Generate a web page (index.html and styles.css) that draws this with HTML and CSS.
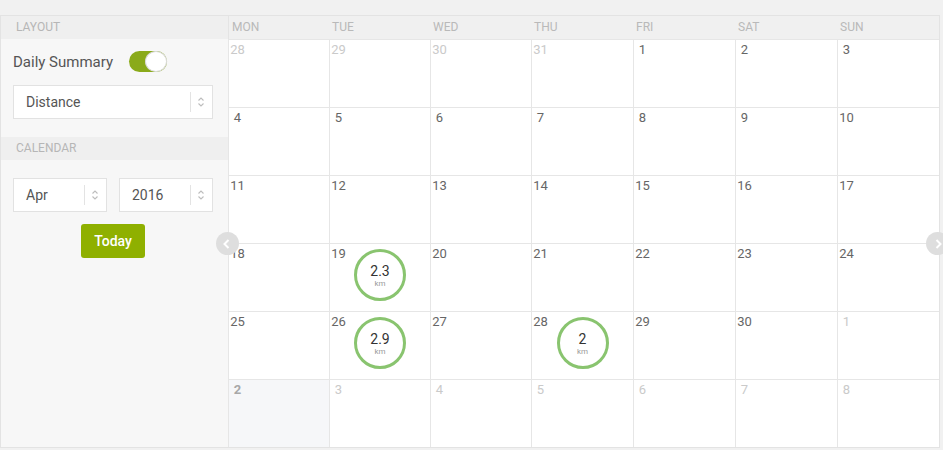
FILE: index.html
```html
<!DOCTYPE html>
<html>
<head>
<meta charset="utf-8">
<link rel="stylesheet" href="styles.css">
</head>
<body>
<div class="app">
  <aside class="side">
    <div class="sec-head">Layout</div>
    <div class="side-body">
      <div class="toggle-row">
        <span class="label">Daily Summary</span>
        <span class="switch"><span class="knob"></span></span>
      </div>
      <div class="select">
        <span class="val">Distance</span>
        <span class="sep"></span>
        <svg class="arrows" width="6" height="10" viewBox="0 0 6 10"><polyline points="0.5,3.5 3,1 5.5,3.5" /><polyline points="0.5,6.5 3,9 5.5,6.5" /></svg>
      </div>
    </div>
    <div class="sec-head">Calendar</div>
    <div class="side-body cal-body">
      <div class="selects">
        <div class="select">
          <span class="val">Apr</span>
          <span class="sep"></span>
          <svg class="arrows" width="6" height="10" viewBox="0 0 6 10"><polyline points="0.5,3.5 3,1 5.5,3.5" /><polyline points="0.5,6.5 3,9 5.5,6.5" /></svg>
        </div>
        <div class="select">
          <span class="val">2016</span>
          <span class="sep"></span>
          <svg class="arrows" width="6" height="10" viewBox="0 0 6 10"><polyline points="0.5,3.5 3,1 5.5,3.5" /><polyline points="0.5,6.5 3,9 5.5,6.5" /></svg>
        </div>
      </div>
      <button class="today">Today</button>
    </div>
  </aside>
  <main class="cal">
    <div class="dow">
      <div>Mon</div><div>Tue</div><div>Wed</div><div>Thu</div><div>Fri</div><div>Sat</div><div>Sun</div>
    </div>
    <div class="grid">
      <div class="cell other"><span class="num">28</span></div>
      <div class="cell other"><span class="num">29</span></div>
      <div class="cell other"><span class="num">30</span></div>
      <div class="cell other"><span class="num">31</span></div>
      <div class="cell"><span class="num">1</span></div>
      <div class="cell"><span class="num">2</span></div>
      <div class="cell"><span class="num">3</span></div>

      <div class="cell"><span class="num">4</span></div>
      <div class="cell"><span class="num">5</span></div>
      <div class="cell"><span class="num">6</span></div>
      <div class="cell"><span class="num">7</span></div>
      <div class="cell"><span class="num">8</span></div>
      <div class="cell"><span class="num">9</span></div>
      <div class="cell"><span class="num">10</span></div>

      <div class="cell"><span class="num">11</span></div>
      <div class="cell"><span class="num">12</span></div>
      <div class="cell"><span class="num">13</span></div>
      <div class="cell"><span class="num">14</span></div>
      <div class="cell"><span class="num">15</span></div>
      <div class="cell"><span class="num">16</span></div>
      <div class="cell"><span class="num">17</span></div>

      <div class="cell"><span class="num">18</span></div>
      <div class="cell"><span class="num">19</span><div class="stat"><span class="stat-val">2.3</span><span class="stat-unit">km</span></div></div>
      <div class="cell"><span class="num">20</span></div>
      <div class="cell"><span class="num">21</span></div>
      <div class="cell"><span class="num">22</span></div>
      <div class="cell"><span class="num">23</span></div>
      <div class="cell"><span class="num">24</span></div>

      <div class="cell"><span class="num">25</span></div>
      <div class="cell"><span class="num">26</span><div class="stat"><span class="stat-val">2.9</span><span class="stat-unit">km</span></div></div>
      <div class="cell"><span class="num">27</span></div>
      <div class="cell"><span class="num">28</span><div class="stat"><span class="stat-val">2</span><span class="stat-unit">km</span></div></div>
      <div class="cell"><span class="num">29</span></div>
      <div class="cell"><span class="num">30</span></div>
      <div class="cell other"><span class="num">1</span></div>

      <div class="cell other today-cell"><span class="num">2</span></div>
      <div class="cell other"><span class="num">3</span></div>
      <div class="cell other"><span class="num">4</span></div>
      <div class="cell other"><span class="num">5</span></div>
      <div class="cell other"><span class="num">6</span></div>
      <div class="cell other"><span class="num">7</span></div>
      <div class="cell other"><span class="num">8</span></div>
    </div>
    <span class="nav prev"><svg width="8" height="10" viewBox="0 0 8 10"><polyline points="5.5,1 1.5,5 5.5,9" /></svg></span>
    <span class="nav next"><svg width="8" height="10" viewBox="0 0 8 10"><polyline points="2.5,1 6.5,5 2.5,9" /></svg></span>
  </main>
</div>
</body>
</html>
```

FILE: styles.css
```css
html, body {
  margin: 0;
  padding: 0;
}
body {
  background: #f1f1f1;
  font-family: Roboto, "Liberation Sans", sans-serif;
  overflow: hidden;
  width: 943px;
  height: 450px;
}
.app {
  margin-top: 15px;
  width: 940px;
  height: 433px;
  box-sizing: border-box;
  border: 1px solid #e3e3e3;
  display: flex;
  background: #fff;
}
.side {
  width: 227px;
  flex: none;
  background: #f7f7f7;
}
.sec-head {
  height: 23px;
  line-height: 23px;
  background: #efefef;
  color: #b6b6b6;
  font-size: 12px;
  text-transform: uppercase;
  padding-left: 15px;
}
.side-body {
  padding: 12px 15px 18px 12px;
  display: flex;
  flex-direction: column;
  gap: 13px;
}
.cal-body {
  padding-top: 18px;
  gap: 12px;
}
.toggle-row {
  display: flex;
  align-items: center;
  gap: 16px;
  height: 21px;
}
.label {
  font-size: 15px;
  color: #555;
}
.switch {
  width: 38px;
  height: 21px;
  border-radius: 11px;
  background: #8aaa1a;
  display: flex;
  justify-content: flex-end;
}
.knob {
  width: 22px;
  height: 21px;
  box-sizing: border-box;
  border-radius: 50%;
  background: #fff;
  border: 1px solid #dcdcdc;
}
.select {
  display: flex;
  align-items: center;
  height: 34px;
  box-sizing: border-box;
  border: 1px solid #e2e2e2;
  background: #fff;
  padding-left: 12px;
}
.select .val {
  flex: 1;
  font-size: 14px;
  color: #555;
}
.sep {
  width: 1px;
  height: 20px;
  background: #e3e3e3;
}
.arrows {
  margin: 0 8px 0 7px;
  fill: none;
  stroke: #bdbdbd;
  stroke-width: 1.1;
}
.selects {
  display: grid;
  grid-template-columns: 94px 94px;
  gap: 12px;
}
.today {
  align-self: center;
  width: 64px;
  height: 34px;
  border: none;
  border-radius: 3px;
  background: #8fb000;
  color: #fff;
  font-family: Roboto, "Liberation Sans", sans-serif;
  font-size: 14px;
  font-weight: 500;
  padding: 0;
}
.cal {
  flex: 1;
  position: relative;
}
.dow {
  display: grid;
  grid-template-columns: repeat(3, 101px) repeat(4, 102px);
  height: 23px;
  background: #f0f0f0;
  box-shadow: inset 1px 0 0 #e4e4e4;
}
.dow div {
  font-size: 12px;
  line-height: 23px;
  color: #b9b9b9;
  text-transform: uppercase;
  padding-left: 3px;
}
.dow div:first-child {
  padding-left: 4px;
}
.grid {
  display: grid;
  grid-template-columns: repeat(3, 101px) repeat(4, 102px);
  grid-auto-rows: 68px;
}
.cell {
  border-top: 1px solid #e6e6e6;
  border-left: 1px solid #e6e6e6;
  display: grid;
  grid-template: 1fr / 1fr;
}
.cell > * {
  grid-area: 1 / 1;
}
.num {
  justify-self: start;
  align-self: start;
  min-width: 15px;
  text-align: center;
  font-size: 13px;
  line-height: 15px;
  color: #666;
  padding: 2px 0 0 1px;
}
.other .num {
  color: #cacaca;
}
.today-cell {
  background: #f6f7f9;
}
.today-cell .num {
  font-weight: bold;
  color: #a8a8a8;
}
.stat {
  justify-self: center;
  align-self: start;
  margin-top: 5px;
  width: 52px;
  height: 52px;
  box-sizing: border-box;
  border: 3px solid #89c46f;
  border-radius: 50%;
  display: flex;
  flex-direction: column;
  align-items: center;
  justify-content: center;
}
.stat-val {
  font-size: 14px;
  line-height: 15px;
  color: #333;
  margin-top: 1px;
}
.stat-unit {
  font-size: 8px;
  line-height: 9px;
  color: #9a9a9a;
}
.nav {
  position: absolute;
  top: 216px;
  width: 23px;
  height: 23px;
  border-radius: 50%;
  background: #dedede;
  display: flex;
  align-items: center;
  justify-content: center;
}
.nav svg {
  fill: none;
  stroke: #fff;
  stroke-width: 2;
}
.prev {
  left: -12px;
}
.nav.prev svg {
  margin-left: -2px;
}
.next {
  left: 698px;
}
```
